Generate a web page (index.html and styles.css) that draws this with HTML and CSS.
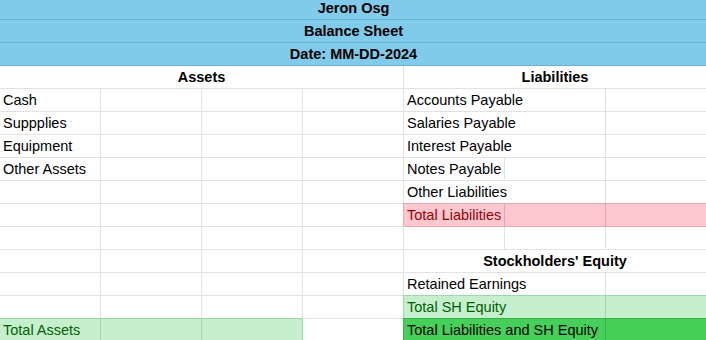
FILE: index.html
```html
<!DOCTYPE html>
<html>
<head>
<meta charset="utf-8">
<link rel="stylesheet" href="styles.css">
</head>
<body>
<div class="sheet">
  <div class="cell title span7">Jeron Osg</div>
  <div class="cell title span7">Balance Sheet</div>
  <div class="cell title span7">Date: MM-DD-2024</div>

  <div class="cell head span4">Assets</div>
  <div class="cell head span3">Liabilities</div>

  <div class="cell">Cash</div><div class="cell"></div><div class="cell"></div><div class="cell"></div>
  <div class="cell span2">Accounts Payable</div><div class="cell"></div>

  <div class="cell">Suppplies</div><div class="cell"></div><div class="cell"></div><div class="cell"></div>
  <div class="cell span2">Salaries Payable</div><div class="cell"></div>

  <div class="cell">Equipment</div><div class="cell"></div><div class="cell"></div><div class="cell"></div>
  <div class="cell span2">Interest Payable</div><div class="cell"></div>

  <div class="cell">Other Assets</div><div class="cell"></div><div class="cell"></div><div class="cell"></div>
  <div class="cell">Notes Payable</div><div class="cell"></div><div class="cell"></div>

  <div class="cell"></div><div class="cell"></div><div class="cell"></div><div class="cell"></div>
  <div class="cell span2">Other Liabilities</div><div class="cell"></div>

  <div class="cell"></div><div class="cell"></div><div class="cell"></div><div class="cell"></div>
  <div class="cell bad">Total Liabilities</div><div class="cell bad"></div><div class="cell bad"></div>

  <div class="cell"></div><div class="cell"></div><div class="cell"></div><div class="cell"></div>
  <div class="cell"></div><div class="cell"></div><div class="cell"></div>

  <div class="cell"></div><div class="cell"></div><div class="cell"></div><div class="cell"></div>
  <div class="cell head span3">Stockholders' Equity</div>

  <div class="cell"></div><div class="cell"></div><div class="cell"></div><div class="cell"></div>
  <div class="cell span2">Retained Earnings</div><div class="cell"></div>

  <div class="cell"></div><div class="cell"></div><div class="cell"></div><div class="cell"></div>
  <div class="cell good span2">Total SH Equity</div><div class="cell good"></div>

  <div class="cell good">Total Assets</div><div class="cell good"></div><div class="cell good"></div><div class="cell"></div>
  <div class="cell total span2">Total Liabilities and SH Equity</div><div class="cell total"></div>
</div>
</body>
</html>
```

FILE: styles.css
```css
html, body {
  margin: 0;
  padding: 0;
  background: #ffffff;
  overflow: hidden;
}

.sheet {
  display: grid;
  grid-template-columns: repeat(7, 101px);
  grid-auto-rows: 23px;
  margin-top: -3px;
  font-family: "Liberation Sans", Arial, sans-serif;
  font-size: 14.5px;
  color: #000000;
}

.cell {
  box-sizing: border-box;
  border-right: 1px solid #e2e2e2;
  border-bottom: 1px solid #e2e2e2;
  padding: 1px 3px 0 3px;
  line-height: 21px;
  white-space: nowrap;
  overflow: hidden;
}

.span2 { grid-column: span 2; }
.span3 { grid-column: span 3; }
.span4 { grid-column: span 4; }
.span7 { grid-column: span 7; }

.title {
  background: #80caea;
  border-right: none;
  border-bottom: 1px solid #6cb0d2;
  font-weight: bold;
  text-align: center;
}

.head {
  font-weight: bold;
  text-align: center;
}

.bad {
  background: #ffc7ce;
  color: #9c0006;
  border-right-color: #e4a9b0;
  border-bottom-color: #e4a9b0;
  box-shadow: -1px -1px 0 0 #e4a9b0;
}

.good {
  background: #c6efce;
  color: #006100;
  border-right-color: #a4d6ae;
  border-bottom-color: #a4d6ae;
  box-shadow: -1px -1px 0 0 #a4d6ae;
}

.total {
  background: #46d05a;
  color: #000000;
  border-right-color: #3bb34d;
  border-bottom-color: #3bb34d;
  box-shadow: -1px -1px 0 0 #3bb34d;
}
```
